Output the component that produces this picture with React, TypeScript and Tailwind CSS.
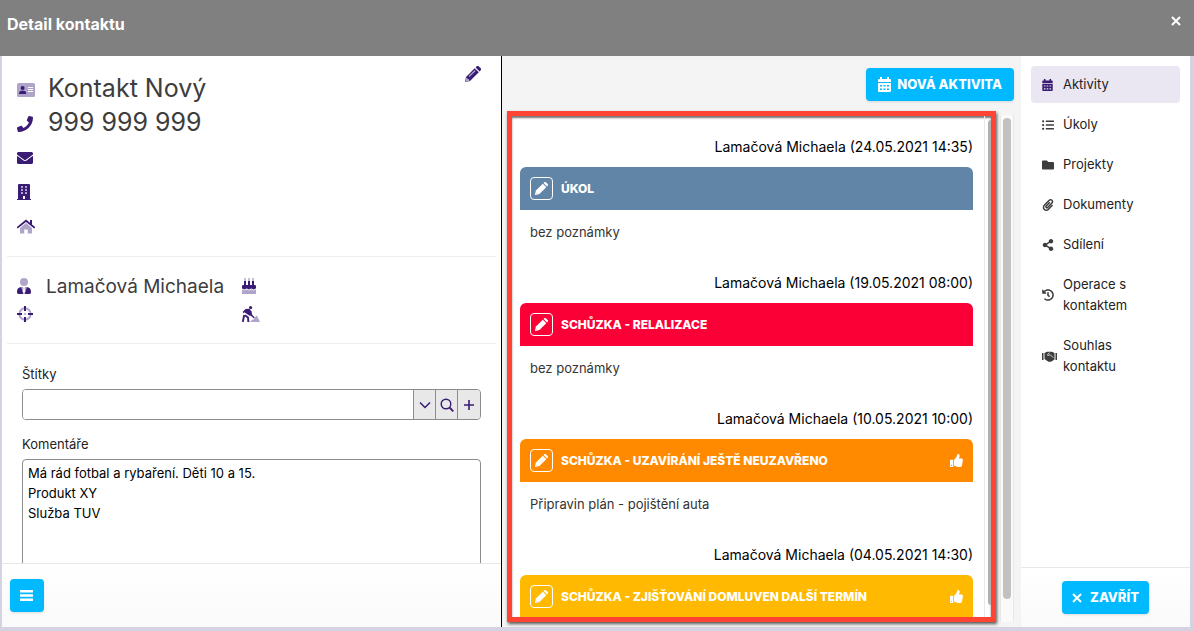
import { useState } from 'react';
import type { ReactNode } from 'react';
import { FaEnvelope, FaFolder, FaHistory, FaListUl, FaPaperclip, FaPhone, FaShareAlt, FaThumbsUp } from 'react-icons/fa';

const activities = [
  { date: '24.05.2021 14:35', title: 'ÚKOL', note: 'bez poznámky', color: 'bg-[#6085a6]', liked: false },
  { date: '19.05.2021 08:00', title: 'SCHŮZKA - RELALIZACE', note: 'bez poznámky', color: 'bg-[#fb0037]', liked: false },
  {
    date: '10.05.2021 10:00',
    title: 'SCHŮZKA - UZAVÍRÁNÍ JEŠTĚ NEUZAVŘENO',
    note: 'Připravin plán - pojištění auta',
    color: 'bg-[#ff8a00]',
    liked: true,
  },
  {
    date: '04.05.2021 14:30',
    title: 'SCHŮZKA - ZJIŠŤOVÁNÍ DOMLUVEN DALŠÍ TERMÍN',
    note: '',
    color: 'bg-[#ffb900]',
    liked: true,
  },
];

function IdCardIcon() {
  return (
    <svg width="18" height="14" viewBox="0 0 18 14" aria-hidden="true">
      <rect width="18" height="14" rx="1.5" fill="#b0a4ca" />
      <circle cx="5.6" cy="4.9" r="2" fill="#3b1c74" />
      <path d="M2 11c0-2 1-3.200 2.400-3.200h2.400c1.400 0 2.400 1.200 2.400 3.200z" fill="#3b1c74" />
      <path d="M11 4.500h5M11 6.500h5M11 8.500h5" stroke="#fff" strokeWidth="1" />
    </svg>
  );
}

function BuildingIcon() {
  return (
    <svg width="14" height="16" viewBox="0 0 14 16" aria-hidden="true">
      <path d="M1 1a1 1 0 0 1 1-1h10a1 1 0 0 1 1 1v14h1v1H0v-1h1z" fill="#3b1c74" />
      <path d="M4 2h2v2H4zM8 2h2v2H8zM4 5h2v2H4zM8 5h2v2H8zM4 8h2v2H4zM8 8h2v2H8z" fill="#b0a4ca" />
      <path d="M6 12h2v3H6z" fill="#fff" />
    </svg>
  );
}

function HomeIcon() {
  return (
    <svg width="18" height="15" viewBox="0 0 18 15" aria-hidden="true">
      <path d="M9 4l6 5v5.500h-4.200v-4H7.200v4H3V9z" fill="#b0a4ca" />
      <path d="M.8 8.400L9 1.700l8.200 6.700" fill="none" stroke="#3b1c74" strokeWidth="1.800" strokeLinecap="round" />
      <path d="M13 1h2v5.200l-2-1.600z" fill="#3b1c74" />
    </svg>
  );
}

function UserTieIcon() {
  return (
    <svg width="14" height="16" viewBox="0 0 14 16" aria-hidden="true">
      <circle cx="7" cy="4" r="4" fill="#b0a4ca" />
      <path d="M4.200 9.100L6 15.500h2l1.800-6.400L8 9l-.5 1.500.7 3L7 15l-1.200-1.500.7-3L6 9z" fill="#b0a4ca" />
      <path d="M4.200 9L6.300 16H1.400A1.400 1.400 0 0 1 0 14.600v-1.400C0 11 1.800 9.200 4.200 9zM9.800 9c2.400.2 4.200 2 4.200 4.200v1.400a1.400 1.400 0 0 1-1.400 1.400H7.700z" fill="#3b1c74" />
    </svg>
  );
}

function CrosshairsIcon() {
  return (
    <svg width="16" height="16" viewBox="0 0 16 16" aria-hidden="true">
      <circle cx="8" cy="8" r="5.700" fill="none" stroke="#b0a4ca" strokeWidth="1.900" />
      <path d="M8 0v5M8 11v5M0 8h5M11 8h5" stroke="#3b1c74" strokeWidth="2" />
      <circle cx="8" cy="8" r="1" fill="#b0a4ca" />
    </svg>
  );
}

function CakeIcon() {
  return (
    <svg width="14" height="16" viewBox="0 0 14 16" aria-hidden="true">
      <path d="M3 0v3M7 0v3M11 0v3" stroke="#b0a4ca" strokeWidth="1.400" />
      <path d="M0 11.500c1.200 0 1.200 1 2.400 1s1.200-1 2.300-1 1.200 1 2.300 1 1.200-1 2.300-1 1.200 1 2.300 1 1.200-1 2.400-1V16H0z" fill="#b0a4ca" />
      <path d="M2 3h2v4h2V3h2v4h2V3h2v4h.8A1.200 1.200 0 0 1 14 8.200v2.400c-1.200 0-1.200 1-2.400 1s-1.200-1-2.300-1-1.200 1-2.300 1-1.200-1-2.300-1-1.200 1-2.300 1-1.200-1-2.400-1V8.200A1.200 1.200 0 0 1 1.200 7H2z" fill="#3b1c74" />
    </svg>
  );
}

function DiggingIcon() {
  return (
    <svg width="18" height="16" viewBox="0 0 18 16" aria-hidden="true">
      <path d="M8 16l2-2 1.600-.6 2.600-3.600h.8l3 6.200z" fill="#b0a4ca" />
      <circle cx="8.600" cy="1.600" r="1.600" fill="#3b1c74" />
      <path d="M.8 5.800L3.600 3l3.600-.2 2.400 2.800.4 2.800 2.800 3.200-1 .7-3-2.600-1.500-.2-5-3.200-1 1.300z" fill="#3b1c74" />
      <path d="M2.200 9L.8 16M3 9.200l3 2.300.4 4.500" fill="none" stroke="#3b1c74" strokeWidth="1.900" />
    </svg>
  );
}

function PencilIcon() {
  return (
    <svg width="16" height="16" viewBox="0 0 16 16" aria-hidden="true">
      <path d="M1 11L9.700 2.200 13.800 6.300 5 15l-5 1z" fill="#3b1c74" />
      <path d="M10.600 1.400l.9-.9a1.700 1.700 0 0 1 2.400 0L15.500 2.100a1.700 1.700 0 0 1 0 2.400l-.9.9z" fill="#3b1c74" />
      <path d="M1 11.500L.3 15.700 4.500 15l-.8-2-1.500-.4z" fill="#b0a4ca" />
      <path d="M4 10.500l6.200-6" stroke="#b0a4ca" strokeWidth="1.200" />
    </svg>
  );
}

function SmallPencilIcon() {
  return (
    <svg width="13" height="13" viewBox="0 0 16 16" fill="currentColor" aria-hidden="true">
      <path d="M1.100 10.600L9.600 2.100l4.300 4.300-8.500 8.500-4.500 1A.8.8 0 0 1 0 15z" />
      <path d="M10.500 1.200l.8-.8a1.500 1.500 0 0 1 2.100 0l2.200 2.200a1.500 1.500 0 0 1 0 2.100l-.8.8z" />
      <path d="M1.600 13.300l1.200 1.200" stroke="#0005" strokeWidth=".8" />
    </svg>
  );
}

function CalendarIcon({ width, height }: { width: number; height: number }) {
  return (
    <svg width={width} height={height} viewBox="0 0 13 15" fill="currentColor" fillRule="evenodd" aria-hidden="true">
      <path d="M2 0h2v2h5V0h2v2h1a1 1 0 0 1 1 1v2H0V3a1 1 0 0 1 1-1h1z" />
      <path d="M0 6h13v8a1 1 0 0 1-1 1H1a1 1 0 0 1-1-1zM2 8v1.500h2V8zM5.500 8v1.500h2V8zM9 8v1.500h2V8zM2 11.500V13h2v-1.500zM5.500 11.500V13h2v-1.500zM9 11.500V13h2v-1.500z" />
    </svg>
  );
}

function CloseIcon() {
  return (
    <svg width="10" height="10" viewBox="0 0 10 10" fill="none" stroke="currentColor" strokeWidth="2" aria-hidden="true">
      <path d="M1 1l8 8M9 1L1 9" />
    </svg>
  );
}

function HandshakeIcon() {
  return (
    <svg width="15" height="11" viewBox="0 0 15 11" aria-hidden="true">
      <path d="M0 2h1.500v7H0zM13.500 2H15v7h-1.500z" fill="#3d3d3d" />
      <path d="M2.500 2L5 .8h5L12.500 2v6.500L9 10.700H6.400L2.500 8z" fill="#3d3d3d" />
      <path d="M7.500 1.800L5.300 3.900c.8 1 1.700.6 2.700-.4l3.200 3.200" fill="none" stroke="#fff" strokeWidth=".8" />
    </svg>
  );
}

function ContactRow({ icon, children }: { icon: ReactNode; children?: ReactNode }) {
  return (
    <div className="flex h-[34px] items-center">
      <span className="w-[31px] shrink-0 text-base text-[#3b1c74]">{icon}</span>
      <span className="pb-1 text-[25px] text-[#3d3d3d]">{children}</span>
    </div>
  );
}

function Activity({ item }: { item: (typeof activities)[number] }) {
  return (
    <article className="mb-[29px]">
      <p className="mb-2.5 text-right text-sm leading-[21px] text-black">Lamačová Michaela ({item.date})</p>
      <div className={`flex h-[43px] items-center rounded-t-md px-2.5 text-white ${item.color}`}>
        <button aria-label="Upravit" className="mr-2 flex size-[23px] items-center justify-center rounded border border-white">
          <SmallPencilIcon />
        </button>
        <h3 className="flex-1 text-xs font-extrabold whitespace-nowrap">{item.title}</h3>
        {item.liked && <FaThumbsUp size={13} />}
      </div>
      {item.note && <p className="mt-3 px-2.5 text-[#333]">{item.note}</p>}
    </article>
  );
}

const menu = [
  { label: 'Aktivity', icon: <CalendarIcon width={11} height={12} /> },
  { label: 'Úkoly', icon: <FaListUl size={12} /> },
  { label: 'Projekty', icon: <FaFolder size={12} /> },
  { label: 'Dokumenty', icon: <FaPaperclip size={12} /> },
  { label: 'Sdílení', icon: <FaShareAlt size={12} /> },
  { label: 'Operace s kontaktem', icon: <FaHistory size={12} /> },
  { label: 'Souhlas kontaktu', icon: <HandshakeIcon /> },
];

function App() {
  const [active, setActive] = useState('Aktivity');
  const [tags, setTags] = useState('');
  const [comments, setComments] = useState('Má rád fotbal a rybaření. Děti 10 a 15.\nProdukt XY\nSlužba TUV');

  return (
    <div className="flex h-screen flex-col overflow-hidden bg-[#d5d2e2] font-[Inter,sans-serif] text-[13px] leading-[21px] text-[#222]">
      <header className="flex h-14 shrink-0 items-start justify-between bg-[#808080] px-[7px] pt-3 text-white">
        <h1 className="text-base leading-6 font-bold">Detail kontaktu</h1>
        <button aria-label="Zavřít" className="p-1.5 pt-1">
          <CloseIcon />
        </button>
      </header>

      <main className="mr-1 mb-1 ml-0.5 grid min-h-0 flex-1 grid-cols-[minmax(0,500fr)_minmax(0,519fr)_169px] grid-rows-[minmax(0,1fr)]">
        <section className="flex flex-col border-r border-black bg-white">
          <div className="min-h-0 flex-1 overflow-hidden px-[5px]">
            <div className="flex justify-between border-b border-[#eee] px-2.5 pb-[13px]">
              <div className="pt-[17px]">
                <ContactRow icon={<IdCardIcon />}>Kontakt Nový</ContactRow>
                <ContactRow icon={<FaPhone />}>999 999 999</ContactRow>
                <ContactRow icon={<FaEnvelope />} />
                <ContactRow icon={<BuildingIcon />} />
                <ContactRow icon={<HomeIcon />} />
              </div>
              <button aria-label="Upravit kontakt" className="mt-2.5 mr-[5px] self-start">
                <PencilIcon />
              </button>
            </div>

            <div className="grid grid-cols-[225px_1fr] border-b border-[#eee] px-2.5 pt-[15px] pb-[15px]">
              <div className="flex h-7 items-center text-[19px] text-[#3d3d3d]">
                <span className="w-[29px] shrink-0">
                  <UserTieIcon />
                </span>
                Lamačová Michaela
              </div>
              <div className="flex h-7 items-center">
                <CakeIcon />
              </div>
              <div className="flex h-7 items-center">
                <CrosshairsIcon />
              </div>
              <div className="flex h-7 items-center">
                <DiggingIcon />
              </div>
            </div>

            <div className="px-[15px] pt-5">
              <label htmlFor="tags" className="mb-1 block">
                Štítky
              </label>
              <div className="flex h-[31px] divide-x divide-[#8c8c8c] overflow-hidden rounded border border-[#8c8c8c] text-[#3b1c74]">
                <input
                  id="tags"
                  value={tags}
                  onChange={(e) => setTags(e.target.value)}
                  className="min-w-0 flex-1 bg-white px-1.5 text-black outline-none"
                />
                <button aria-label="Rozbalit" className="flex w-[22px] items-center justify-center bg-[#e8e8e8]">
                  <svg width="12" height="8" viewBox="0 0 12 8" fill="none" stroke="currentColor" strokeWidth="1.500">
                    <path d="M1 1.500l5 5 5-5" />
                  </svg>
                </button>
                <button aria-label="Hledat" className="flex w-[22px] items-center justify-center bg-[#e8e8e8]">
                  <svg width="14" height="14" viewBox="0 0 14 14" fill="none" stroke="currentColor" strokeWidth="1.400">
                    <circle cx="6" cy="6" r="4.800" />
                    <path d="M9.500 9.500l3.800 3.800" strokeWidth="1.800" />
                  </svg>
                </button>
                <button aria-label="Přidat" className="flex w-[22px] items-center justify-center bg-[#e8e8e8]">
                  <svg width="10" height="10" viewBox="0 0 10 10" stroke="currentColor" strokeWidth="1.600">
                    <path d="M5 0v10M0 5h10" />
                  </svg>
                </button>
              </div>
              <label htmlFor="comments" className="mt-3.5 mb-1 block">
                Komentáře
              </label>
              <textarea
                id="comments"
                value={comments}
                onChange={(e) => setComments(e.target.value)}
                className="block h-40 w-full resize-none rounded border border-[#8c8c8c] px-[5px] py-[3px] leading-5 text-black outline-none"
              />
            </div>
          </div>
          <footer className="h-16 shrink-0 border-t border-[#e8e8e8] bg-linear-to-b from-white to-[#fafafa] px-2 pt-[15px]">
            <button aria-label="Menu" className="flex h-[33px] w-[34px] items-center rounded bg-[#00b9ff] px-2.5 text-white shadow">
              <svg width="13" height="11" viewBox="0 0 13 11" fill="currentColor">
                <path d="M0 0h13v2.500H0zM0 4.200h13v2.600H0zM0 8.500h13V11H0z" />
              </svg>
            </button>
          </footer>
        </section>

        <section className="flex flex-col bg-[#f4f4f4] px-[5px] pt-3 pb-[5px]">
          <button className="mr-0.5 mb-2.5 flex h-[33px] items-center gap-1.5 self-end rounded bg-[#00b9ff] px-3 text-[13px] font-extrabold whitespace-nowrap text-white shadow">
            <CalendarIcon width={13} height={15} />
            NOVÁ AKTIVITA
          </button>
          <div className="flex min-h-0 flex-1">
            <div className="flex min-w-0 flex-1 border-5 border-[#ff4433] bg-white shadow-[1px_2px_3px_#555,inset_0_2px_2px_#777]">
              <div className="min-w-0 flex-1 overflow-hidden pt-5 pr-[11px] pl-2">
                {activities.map((item) => (
                  <Activity key={item.date} item={item} />
                ))}
              </div>
              <div aria-hidden="true" className="w-[7px] border-l border-[#e8e8e8] pt-1 pb-3 pl-[3px]">
                <div className="h-full rounded-l bg-[#b0b0b0]" />
              </div>
            </div>
            <div aria-hidden="true" className="mt-1 mr-0.5 ml-1 w-3.5 border-x border-[#e8e8e8] bg-[#fafafa] px-0.5 pt-[3px] pb-[23px]">
              <div className="mx-auto h-full w-2 rounded-full bg-[#c1c1c1]" />
            </div>
          </div>
        </section>

        <aside className="flex flex-col bg-white">
          <nav className="flex flex-1 flex-col gap-[3px] p-2.5">
            {menu.map(({ label, icon }) => (
              <button
                key={label}
                onClick={() => setActive(label)}
                className={`flex items-center rounded py-2 pr-8 pl-[11px] text-left ${
                  active === label ? 'bg-[#eae7f2] text-[#3b1c74]' : 'text-[#3d3d3d]'
                }`}
              >
                <span className="w-[21px] shrink-0">{icon}</span>
                <span className="text-[#222]">{label}</span>
              </button>
            ))}
          </nav>
          <footer className="flex h-[60px] shrink-0 justify-center border-t border-[#e8e8e8] bg-linear-to-b from-white to-[#fafafa] pt-[13px]">
            <button className="flex h-[33px] items-center gap-2 rounded bg-[#00b9ff] px-2.5 text-[13px] font-extrabold text-white shadow">
              <CloseIcon />
              ZAVŘÍT
            </button>
          </footer>
        </aside>
      </main>
    </div>
  );
}

export default App;
